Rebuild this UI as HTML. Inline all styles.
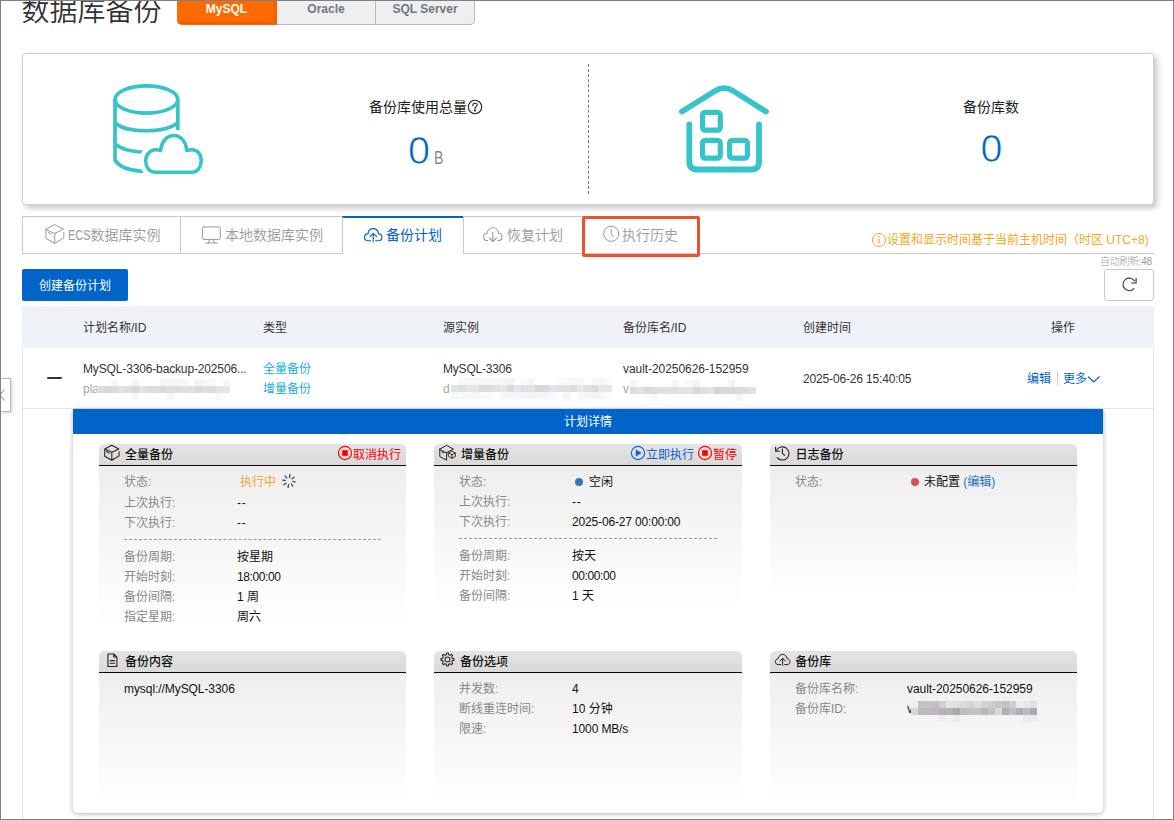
<!DOCTYPE html>
<html lang="zh-CN">
<head>
<meta charset="utf-8">
<title>数据库备份</title>
<style>
*{box-sizing:border-box;margin:0;padding:0}
html,body{width:1174px;height:820px;overflow:hidden;background:#fff}
body{position:relative;font-family:"Liberation Sans","Noto Sans CJK SC",sans-serif;font-size:12px;color:#333}
.abs{position:absolute}
.t{position:absolute;white-space:nowrap;line-height:1}
#frame{position:absolute;left:0;top:0;width:1174px;height:820px;border:1px solid #808080;z-index:50;pointer-events:none}
/* top */
#title{left:21.5px;top:-2.5px;font-size:28px;font-weight:350;color:#333;letter-spacing:0}
#dbtabs{left:177px;top:0;height:25px;display:flex}
#dbtabs div{height:25px;line-height:18px;font-size:12px;font-weight:bold;text-align:center;color:#6d7885;background:#efefef;border:1px solid #b9b9b9;border-top:none;border-left:none}
#dbtabs .on{background:#ff6a00;color:#fff;border-color:#ff6a00;border-radius:0 0 0 5px;box-shadow:inset -2px -2px 2px rgba(200,70,0,.35)}
#dbtabs .last{border-radius:0 0 5px 0}
/* stat card */
#stat{left:22px;top:53px;width:1132px;height:152px;border:1px solid #d0d0d0;border-radius:4px;background:#fff;box-shadow:3px 3px 6px rgba(0,0,0,.24)}
.lbl14{font-size:14px;color:#222}
.big{font-size:39.5px;color:#0064c8;-webkit-text-stroke:0.7px #fff}
/* tabs */
#tabline{left:22px;top:253px;width:1132px;height:1px;background:#c8c9cc}
.tab{position:absolute;top:216px;height:38px;border:1px solid #c8c9cc;border-right:none;background:#fff;color:#999;font-size:14px}
.tab .t{top:11px;font-weight:350}
/* table */
#thead{left:22px;top:306px;width:1132px;height:42px;background:#eff3f8}
.th{top:322px;color:#333}
.lnk{color:#0064c8}
.gray{color:#a6a6a6}
/* detail */
#detail{left:73px;top:409px;width:1030px;height:404px;background:#fff;border-radius:0 0 5px 5px;box-shadow:0 1px 5px rgba(0,0,0,.3)}
#dhead{left:73px;top:409px;width:1030px;height:25px;background:#0064c8;color:#fff;text-align:center;line-height:27px}
.ph{position:absolute;height:22px;background:linear-gradient(#e4e4e4,#d9d9d9);border-bottom:1px solid #0a0a0a;border-radius:5px 5px 0 0}
.pb{position:absolute;background:linear-gradient(#eeeeee,#ffffff)}
.pt{font-weight:500;color:#111}
.k{color:#888}
.v{color:#111}
.blur{background:linear-gradient(90deg,#e9e9e9,#d9d9d9 20%,#ececec 35%,#d4d4d4 55%,#e6e6e6 70%,#d6d6d6 85%,#ececec);filter:blur(1.5px);opacity:.9}
.blur2{background:linear-gradient(90deg,#dcdcdc,#c9c3c8 15%,#d8d8da 30%,#c4bcc0 45%,#d5d5d8 60%,#bdb6ba 75%,#cfcfd2 88%,#c2bcc0);filter:blur(1.2px)}
.dash{position:absolute;height:0;border-top:1px dashed #999}
</style>
</head>
<body>
<!-- TOP -->
<div class="t" id="title">数据库备份</div>
<div class="abs" id="dbtabs">
  <div class="on" style="width:100px">MySQL</div>
  <div style="width:99px">Oracle</div>
  <div class="last" style="width:99px">SQL Server</div>
</div>

<!-- STAT CARD -->
<div class="abs" id="stat"></div>
<div id="stat-content">
<svg class="abs" style="left:113px;top:84px" width="92" height="92" viewBox="0 0 92 92" fill="none" stroke="#35c4ca" stroke-width="3.7">
  <ellipse cx="33.4" cy="15.5" rx="31.4" ry="13.65"/>
  <path d="M2 15.5 L2 76 C6 83 18 87 33.4 87.5"/>
  <path d="M64.8 15.5 L64.8 47"/>
  <path d="M2 38.5 C12 49.5 54 49.5 64.8 38.5"/>
  <path d="M2 59.5 C8 65.5 20 68 33.4 68.3"/>
  <path d="M41.8 88.2 C36 88.2 32.7 83 32.7 76.75 C32.7 70 37.5 65.8 43 65.8 C44.5 65.8 46 66 47.6 66.4 C48.5 58 53.5 51.4 60.8 51.4 C68 51.4 73 58 73.9 66.4 C75.5 66 77.5 65.8 79.1 65.8 C84.5 65.8 88.2 70.5 88.2 76.75 C88.2 83 84.5 88.2 79.1 88.2 Z" stroke="#fff" stroke-width="12" fill="#fff"/>
  <path d="M41.8 88.2 C36 88.2 32.7 83 32.7 76.75 C32.7 70 37.5 65.8 43 65.8 C44.5 65.8 46 66 47.6 66.4 C48.5 58 53.5 51.4 60.8 51.4 C68 51.4 73 58 73.9 66.4 C75.5 66 77.5 65.8 79.1 65.8 C84.5 65.8 88.2 70.5 88.2 76.75 C88.2 83 84.5 88.2 79.1 88.2 Z" stroke-width="3.5"/>
</svg>
<div class="t lbl14" style="left:369px;top:100px">备份库使用总量</div>
<svg class="abs" style="left:467px;top:99px" width="16" height="16" viewBox="0 0 16 16" fill="none" stroke="#222" stroke-width="1.1"><circle cx="8" cy="8" r="6.7"/><path d="M5.8 6.4 C5.8 4.9 6.8 4.2 8 4.2 C9.3 4.2 10.2 5 10.2 6.1 C10.2 7.6 8 7.7 8 9.4" stroke-linecap="round"/><circle cx="8" cy="11.4" r="0.5" fill="#222"/></svg>
<div class="t big" style="left:408px;top:131px">0</div>
<div class="t" style="left:433.5px;top:149px;font-size:18px;color:#888;transform:scaleX(.78);transform-origin:left">B</div>
<div class="abs" style="left:588px;top:64px;width:0;height:130px;border-left:1px dashed #777"></div>
<svg class="abs" style="left:670px;top:78px" width="110" height="102" viewBox="0 0 110 102" fill="none" stroke="#35c4ca" stroke-linecap="round" stroke-linejoin="round">
  <path d="M11.8 33.6 L44.8 13.07 Q54.1 7.2 63.5 13.07 L96.1 33.6" stroke-width="5.7"/>
  <path d="M19.3 46.3 L19.3 83.5 Q19.3 91.5 27.3 91.5 L81 91.5 Q89 91.5 89 83.5 L89 46.3" stroke-width="5.8"/>
  <rect x="32.5" y="34.3" width="17.8" height="17.8" rx="2.6" stroke-width="5.2"/>
  <rect x="32.5" y="62.3" width="17.8" height="17.8" rx="2.6" stroke-width="5.2"/>
  <rect x="59.6" y="62.3" width="17.8" height="17.8" rx="2.6" stroke-width="5.2"/>
</svg>
<div class="t lbl14" style="left:963px;top:100px">备份库数</div>
<div class="t big" style="left:980.5px;top:129px">0</div>
</div>

<!-- TABS -->
<div id="tabs">
<div class="abs" id="tabline"></div>
<div class="tab" style="left:22px;width:159px">
  <svg class="abs" style="left:21.5px;top:6px" width="20" height="22" viewBox="0 0 20 22" fill="none" stroke="#999" stroke-width="1" stroke-linejoin="round" stroke-linecap="round"><path d="M0.9 6.2 L9.6 1.6 L18.5 6.2 L9.8 10.3 Z M0.9 6.2 V15.4 L9.8 20.3 L18.8 14.9 V9.3 M9.8 10.3 V20.3 M3.2 9.3 L6.5 11.4"/></svg>
  <div class="t" style="left:44.5px"><span style="display:inline-block;width:23px;transform:scaleX(.78);transform-origin:left center">ECS</span>数据库实例</div>
</div>
<div class="tab" style="left:180px;width:163px">
  <svg class="abs" style="left:20px;top:8px" width="21" height="20" viewBox="0 0 21 20" fill="none" stroke="#999" stroke-width="1" stroke-linecap="round"><rect x="1.4" y="1.9" width="17.9" height="12.5" rx="1.6"/><path d="M4.5 18 H16.5 M8.5 14.5 L7.3 17.8 M12.1 14.5 L13.4 17.8"/></svg>
  <div class="t" style="left:44px">本地数据库实例</div>
</div>
<div class="tab" style="left:342px;width:121px;border-top:2px solid #0064c8;border-bottom:none;color:#0064c8;height:38px">
  <svg class="abs" style="left:19.8px;top:8.7px" width="20.8" height="17" viewBox="0 0 22 18" fill="none" stroke="#0064c8" stroke-width="1.2" stroke-linecap="round" stroke-linejoin="round"><path d="M8.3 14.5 H5.2 C3.2 14.5 1.6 12.9 1.6 10.9 C1.6 9 3.1 7.4 5.2 7.3 C5.5 4.1 7.8 1.7 10.8 1.7 C13.8 1.7 16.1 4.1 16.4 7.3 C18.5 7.4 20 9 20 10.9 C20 12.9 18.4 14.5 16.4 14.5 H13.4"/><path d="M10.8 15.5 V6.8 M7.5 10.1 L10.8 6.8 L14.4 10.1"/></svg>
  <div class="t" style="left:43px;top:10px;font-weight:400">备份计划</div>
</div>
<div class="tab" style="left:463px;width:120px;border-right:none">
  <svg class="abs" style="left:18px;top:9px" width="22" height="18" viewBox="0 0 22 18" fill="none" stroke="#999" stroke-width="1.1" stroke-linecap="round" stroke-linejoin="round"><path d="M5.7 14.5 H5.2 C3.2 14.5 1.6 12.9 1.6 10.9 C1.6 9 3.1 7.4 5.2 7.3 C5.5 4.1 7.8 1.7 10.8 1.7 C13.8 1.7 16.1 4.1 16.4 7.3 C18.5 7.4 20 9 20 10.9 C20 12.9 18.4 14.5 16.4 14.5 H15.9"/><path d="M10.8 6.3 V15.5 M7.2 11.9 L10.8 15.5 L14.6 11.9"/></svg>
  <div class="t" style="left:43px">恢复计划</div>
</div>
<div class="tab" style="left:583px;width:116px;border-left:none">
  <svg class="abs" style="left:19px;top:8px" width="18" height="18" viewBox="0 0 18 18" fill="none" stroke="#999" stroke-width="1" stroke-linecap="round" stroke-linejoin="round"><circle cx="9.3" cy="8.8" r="7.6"/><path d="M9.3 4.5 V9.4 L11.6 11.7"/></svg>
  <div class="t" style="left:39px">执行历史</div>
</div>
<div class="abs" style="left:581.5px;top:216px;width:118px;height:40.5px;border:3px solid #ec512e;border-radius:2px"></div>
<svg class="abs" style="left:871px;top:232px" width="16" height="16" viewBox="0 0 16 16" fill="none" stroke="#f5a623" stroke-width="1"><circle cx="8" cy="8" r="6.6"/><path d="M8 7 V11.4" stroke-width="1.3"/><circle cx="8" cy="4.8" r="0.8" fill="#f5a623" stroke="none"/></svg>
<div class="t" style="left:887px;top:234px;color:#f5a623;font-size:12px">设置和显示时间基于当前主机时间（时区 UTC+8)</div>
</div>

<!-- TOOLBAR -->
<div id="toolbar">
<div class="abs" style="left:22px;top:269px;width:106px;height:32px;background:#0064c8;border-radius:2px;color:#fff;text-align:center;line-height:35px;font-size:12px">创建备份计划</div>
<div class="t" style="left:1100px;top:257px;font-size:10px;color:#999;letter-spacing:-0.3px;font-weight:300">自动刷新:48</div>
<div class="abs" style="left:1104px;top:269px;width:50px;height:32px;border:1px solid #c8c8c8;border-radius:3px;background:#fff"></div>
<svg class="abs" style="left:1120px;top:275px" width="20" height="20" viewBox="0 0 20 20" fill="none" stroke="#333" stroke-width="1.1"><path d="M14.76 6.25 A6.3 6.3 0 1 0 14.13 13.45"/><path d="M16.1 3 V8 H11.2"/></svg>
</div>

<!-- TABLE -->
<div id="table">
<div class="abs" style="left:22px;top:306px;width:1px;height:514px;background:#e3e6ea"></div>
<div class="abs" style="left:1153px;top:306px;width:1px;height:514px;background:#e3e6ea"></div>
<div class="abs" id="thead"></div>
<div class="t th" style="left:83px">计划名称/ID</div>
<div class="t th" style="left:263px">类型</div>
<div class="t th" style="left:443px">源实例</div>
<div class="t th" style="left:623px">备份库名/ID</div>
<div class="t th" style="left:803px">创建时间</div>
<div class="t th" style="left:1051px">操作</div>
<div class="abs" style="left:22px;top:408px;width:1132px;height:1px;background:#e3e6ea"></div>
<div class="abs" style="left:47px;top:377px;width:15px;height:2px;background:#333;border-radius:1px"></div>
<div class="t" style="left:83px;top:363px;letter-spacing:-0.145px">MySQL-3306-backup-202506...</div>
<div class="t gray" style="left:83px;top:383px">pla</div>
<svg class="abs" style="left:97px;top:379px" width="133" height="21" viewBox="0 0 133 21" shape-rendering="crispEdges"><rect x="14" y="0" width="7" height="7" fill="#f7f5f3"/><rect x="35" y="0" width="7" height="7" fill="#f1f4f8"/><rect x="63" y="0" width="7" height="7" fill="#f2f6f2"/><rect x="70" y="0" width="7" height="7" fill="#f4f5f5"/><rect x="77" y="0" width="7" height="7" fill="#f4f5f5"/><rect x="84" y="0" width="7" height="7" fill="#f7f9f8"/><rect x="98" y="0" width="7" height="7" fill="#f4f2f4"/><rect x="105" y="0" width="7" height="7" fill="#f6f8fc"/><rect x="112" y="0" width="7" height="7" fill="#f8f7fa"/><rect x="126" y="0" width="7" height="7" fill="#f2f6f7"/><rect x="0" y="7" width="7" height="7" fill="#dedcde"/><rect x="7" y="7" width="7" height="7" fill="#d5d9dc"/><rect x="14" y="7" width="7" height="7" fill="#dadce0"/><rect x="21" y="7" width="7" height="7" fill="#dee2e4"/><rect x="28" y="7" width="7" height="7" fill="#dddce1"/><rect x="35" y="7" width="7" height="7" fill="#d7d8d7"/><rect x="42" y="7" width="7" height="7" fill="#e1e4e7"/><rect x="49" y="7" width="7" height="7" fill="#dfdcdb"/><rect x="56" y="7" width="7" height="7" fill="#dadddb"/><rect x="63" y="7" width="7" height="7" fill="#ddd9da"/><rect x="70" y="7" width="7" height="7" fill="#dddddc"/><rect x="77" y="7" width="7" height="7" fill="#dedcdd"/><rect x="84" y="7" width="7" height="7" fill="#dee1e3"/><rect x="91" y="7" width="7" height="7" fill="#e1dfe1"/><rect x="98" y="7" width="7" height="7" fill="#d7dbda"/><rect x="105" y="7" width="7" height="7" fill="#dedfe2"/><rect x="112" y="7" width="7" height="7" fill="#dedce0"/><rect x="119" y="7" width="7" height="7" fill="#e5e3e0"/><rect x="126" y="7" width="7" height="7" fill="#e6e5e7"/><rect x="35" y="14" width="7" height="7" fill="#f6f5fb"/><rect x="70" y="14" width="7" height="7" fill="#f6f6fa"/><rect x="119" y="14" width="7" height="7" fill="#f8f8fa"/></svg>
<div class="t" style="left:263px;top:363px;color:#17afd3">全量备份</div>
<div class="t" style="left:263px;top:383px;color:#17afd3">增量备份</div>
<div class="t" style="left:443px;top:363px;letter-spacing:-0.19px">MySQL-3306</div>
<div class="t gray" style="left:443px;top:383px">d</div>
<svg class="abs" style="left:451px;top:378px" width="161" height="21" viewBox="0 0 161 21" shape-rendering="crispEdges"><rect x="7" y="0" width="7" height="7" fill="#f7f9f7"/><rect x="14" y="0" width="7" height="7" fill="#f7f5f6"/><rect x="21" y="0" width="7" height="7" fill="#f8f6f7"/><rect x="28" y="0" width="7" height="7" fill="#f7f4f8"/><rect x="35" y="0" width="7" height="7" fill="#faf5fa"/><rect x="42" y="0" width="7" height="7" fill="#fcf7fa"/><rect x="49" y="0" width="7" height="7" fill="#f4f7fb"/><rect x="56" y="0" width="7" height="7" fill="#f2f4fa"/><rect x="70" y="0" width="7" height="7" fill="#f7f9fa"/><rect x="77" y="0" width="7" height="7" fill="#f4f5f6"/><rect x="105" y="0" width="7" height="7" fill="#fcf6fe"/><rect x="112" y="0" width="7" height="7" fill="#faf9f6"/><rect x="119" y="0" width="7" height="7" fill="#f5f7f6"/><rect x="126" y="0" width="7" height="7" fill="#f6f8f9"/><rect x="140" y="0" width="7" height="7" fill="#f8f8f7"/><rect x="147" y="0" width="7" height="7" fill="#f4f3f6"/><rect x="154" y="0" width="7" height="7" fill="#fbfaf8"/><rect x="0" y="7" width="7" height="7" fill="#e2e4e5"/><rect x="7" y="7" width="7" height="7" fill="#dfdedf"/><rect x="14" y="7" width="7" height="7" fill="#e6e1e4"/><rect x="21" y="7" width="7" height="7" fill="#e4e4e4"/><rect x="28" y="7" width="7" height="7" fill="#dedbe0"/><rect x="35" y="7" width="7" height="7" fill="#e2dddd"/><rect x="42" y="7" width="7" height="7" fill="#dee0e2"/><rect x="49" y="7" width="7" height="7" fill="#e8e5e7"/><rect x="56" y="7" width="7" height="7" fill="#dcd9d9"/><rect x="63" y="7" width="7" height="7" fill="#e8e3e5"/><rect x="70" y="7" width="7" height="7" fill="#e4dfe0"/><rect x="77" y="7" width="7" height="7" fill="#e2e2e6"/><rect x="84" y="7" width="7" height="7" fill="#dbd7db"/><rect x="91" y="7" width="7" height="7" fill="#dcd6de"/><rect x="98" y="7" width="7" height="7" fill="#e2e5e8"/><rect x="105" y="7" width="7" height="7" fill="#e2e2e2"/><rect x="112" y="7" width="7" height="7" fill="#e1e1e5"/><rect x="119" y="7" width="7" height="7" fill="#deddde"/><rect x="126" y="7" width="7" height="7" fill="#e5e7e7"/><rect x="133" y="7" width="7" height="7" fill="#dfdede"/><rect x="140" y="7" width="7" height="7" fill="#dcdde1"/><rect x="147" y="7" width="7" height="7" fill="#eae5ea"/><rect x="154" y="7" width="7" height="7" fill="#e5e7e8"/><rect x="0" y="14" width="7" height="7" fill="#f6f6f6"/><rect x="7" y="14" width="7" height="7" fill="#f5f9fb"/><rect x="14" y="14" width="7" height="7" fill="#f8f9fa"/><rect x="21" y="14" width="7" height="7" fill="#f8f5f4"/><rect x="28" y="14" width="7" height="7" fill="#f9fbf7"/><rect x="35" y="14" width="7" height="7" fill="#fbf9f9"/><rect x="49" y="14" width="7" height="7" fill="#f4f4f9"/><rect x="56" y="14" width="7" height="7" fill="#f6f5fb"/><rect x="63" y="14" width="7" height="7" fill="#f8f6fd"/><rect x="70" y="14" width="7" height="7" fill="#f5f3f6"/><rect x="77" y="14" width="7" height="7" fill="#f5f3f5"/><rect x="84" y="14" width="7" height="7" fill="#f7f4f5"/><rect x="91" y="14" width="7" height="7" fill="#f6f3f9"/><rect x="98" y="14" width="7" height="7" fill="#f8faf9"/><rect x="112" y="14" width="7" height="7" fill="#f4f5f4"/><rect x="126" y="14" width="7" height="7" fill="#f9f6fa"/><rect x="133" y="14" width="7" height="7" fill="#f6f6f5"/><rect x="140" y="14" width="7" height="7" fill="#f3f3f7"/><rect x="147" y="14" width="7" height="7" fill="#f7f4fb"/><rect x="154" y="14" width="7" height="7" fill="#fdfafc"/></svg>
<div class="t" style="left:623px;top:363px;letter-spacing:-0.06px">vault-20250626-152959</div>
<div class="t gray" style="left:623px;top:383px">v</div>
<svg class="abs" style="left:630px;top:380px" width="126" height="21" viewBox="0 0 126 21" shape-rendering="crispEdges"><rect x="0" y="0" width="7" height="7" fill="#f4f3f5"/><rect x="42" y="0" width="7" height="7" fill="#f6f4f4"/><rect x="56" y="0" width="7" height="7" fill="#faf7f9"/><rect x="63" y="0" width="7" height="7" fill="#f4f2f4"/><rect x="98" y="0" width="7" height="7" fill="#f4f3f8"/><rect x="0" y="7" width="7" height="7" fill="#dcdddc"/><rect x="7" y="7" width="7" height="7" fill="#e0e0e5"/><rect x="14" y="7" width="7" height="7" fill="#d9dad7"/><rect x="21" y="7" width="7" height="7" fill="#dadddc"/><rect x="28" y="7" width="7" height="7" fill="#e2dde3"/><rect x="35" y="7" width="7" height="7" fill="#e2e0e4"/><rect x="42" y="7" width="7" height="7" fill="#dfdee5"/><rect x="49" y="7" width="7" height="7" fill="#e4e1e1"/><rect x="56" y="7" width="7" height="7" fill="#e3e2e1"/><rect x="63" y="7" width="7" height="7" fill="#d5d9da"/><rect x="70" y="7" width="7" height="7" fill="#e0dddb"/><rect x="77" y="7" width="7" height="7" fill="#e2e3e2"/><rect x="84" y="7" width="7" height="7" fill="#d7d4d6"/><rect x="91" y="7" width="7" height="7" fill="#dadadd"/><rect x="98" y="7" width="7" height="7" fill="#dbd7d9"/><rect x="105" y="7" width="7" height="7" fill="#d8dcdf"/><rect x="112" y="7" width="7" height="7" fill="#dadddf"/><rect x="119" y="7" width="7" height="7" fill="#e2e2e1"/><rect x="21" y="14" width="7" height="7" fill="#f9f9f8"/><rect x="105" y="14" width="7" height="7" fill="#f6f4fc"/></svg>
<div class="t" style="left:803px;top:373px;letter-spacing:-0.16px">2025-06-26 15:40:05</div>
<div class="t lnk" style="left:1027px;top:373px">编辑</div>
<div class="abs" style="left:1057px;top:371px;width:1px;height:15px;background:#ccc"></div>
<div class="t lnk" style="left:1063px;top:373px">更多</div>
<svg class="abs" style="left:1087px;top:374px" width="14" height="10" viewBox="0 0 14 10" fill="none" stroke="#0064c8" stroke-width="1.1"><path d="M1 2.5 L6.8 8 L12.6 2.5"/></svg>
<div class="abs" style="left:0;top:378px;width:11px;height:34px;border:1px solid #b4bcc8;border-left:none;background:#fff;box-shadow:1px 1px 4px rgba(0,0,0,.2)"></div>
<svg class="abs" style="left:-1px;top:388px" width="8" height="14" viewBox="0 0 8 14" fill="none" stroke="#999" stroke-width="1.1"><path d="M5.5 1.5 L0.8 7 L5.5 12.5"/></svg>
</div>

<!-- DETAIL -->
<div id="detailwrap">
<div class="abs" id="detail"></div>
<div class="abs" id="dhead">计划详情</div>
<div class="ph" style="left:99px;top:444px;width:307px"></div><div class="pb" style="left:99px;top:466px;width:307px;height:162px"></div><svg class="abs" style="left:104px;top:444px" width="16" height="17.6" viewBox="0 0 20 22" fill="none" stroke="#222" stroke-width="1.3" stroke-linejoin="round" stroke-linecap="round"><path d="M0.9 6.2 L9.6 1.6 L18.5 6.2 L9.8 10.3 Z M0.9 6.2 V15.4 L9.8 20.3 L18.8 14.9 V9.3 M9.8 10.3 V20.3 M3.2 9.3 L6.5 11.4"/></svg><div class="t pt" style="left:125px;top:449px">全量备份</div>
<svg class="abs" style="left:337px;top:445px" width="16" height="16" viewBox="0 0 16 16" fill="none" stroke="#ff0000" stroke-width="1.1"><circle cx="8" cy="8" r="6.6"/><rect x="5.2" y="5.2" width="5.6" height="5.6" fill="#ff0000" stroke="none"/></svg><div class="t" style="left:353px;top:449px;color:#ff0000">取消执行</div>
<div class="ph" style="left:434px;top:444px;width:308px"></div><div class="pb" style="left:434px;top:466px;width:308px;height:142px"></div><svg class="abs" style="left:439px;top:444px" width="18" height="17" viewBox="0 0 18 17" fill="none" stroke="#222" stroke-width="1" stroke-linejoin="round" stroke-linecap="round"><path d="M0.8 5.1 L7.6 1.4 L14.4 5.1 L7.6 8.6 Z M0.8 5.1 V12.6 L7.6 16.2 V8.6 M2.8 7.8 L5 9"/><path d="M9.6 9 L12.9 7.2 L16.3 9 V12.4 L12.9 14.3 L9.6 12.4 Z M9.6 9 L12.9 10.8 L16.3 9 M12.9 10.8 V14.3" stroke-width="0.9"/></svg><div class="t pt" style="left:461px;top:449px">增量备份</div>
<svg class="abs" style="left:630px;top:445px" width="16" height="16" viewBox="0 0 16 16" fill="none" stroke="#0e63c7" stroke-width="1.1"><circle cx="8" cy="8" r="6.6"/><path d="M5.8 4.6 L11.6 8 L5.8 11.4 Z" fill="#0e63c7" stroke="none"/></svg><div class="t" style="left:646px;top:449px;color:#0e63c7">立即执行</div><svg class="abs" style="left:697px;top:445px" width="16" height="16" viewBox="0 0 16 16" fill="none" stroke="#ff0000" stroke-width="1.1"><circle cx="8" cy="8" r="6.6"/><rect x="5.2" y="5.2" width="5.6" height="5.6" fill="#ff0000" stroke="none"/></svg><div class="t" style="left:713px;top:449px;color:#ff0000">暂停</div>
<div class="ph" style="left:770px;top:444px;width:307px"></div><div class="pb" style="left:770px;top:466px;width:307px;height:131px"></div><svg class="abs" style="left:774.3px;top:444.7px" width="16" height="16" viewBox="0 0 16 16" fill="none" stroke="#222" stroke-width="1.1" stroke-linecap="round" stroke-linejoin="round"><path d="M2.6 5.2 A6.6 6.6 0 1 1 3.2 12.6"/><path d="M1.6 2.2 V6.2 H5.6"/><path d="M8.4 4 V8.6 L10.6 10.2"/></svg><div class="t pt" style="left:795.5px;top:449px">日志备份</div>
<div class="t k" style="left:124px;top:476px">状态:</div><div class="t v" style="left:240px;top:476px;color:#f2a33c">执行中</div><svg class="abs" style="left:281.5px;top:473.5px" width="14" height="14" viewBox="0 0 14 14" stroke="#222" stroke-width="1.3" stroke-linecap="round"><line x1="7.51" y1="3.34" x2="7.89" y2="0.66" stroke-opacity="0.85"/><line x1="9.95" y1="4.77" x2="12.11" y2="3.15" stroke-opacity="0.80"/><line x1="10.66" y1="7.51" x2="13.34" y2="7.89" stroke-opacity="0.70"/><line x1="9.23" y1="9.95" x2="10.85" y2="12.11" stroke-opacity="0.80"/><line x1="6.49" y1="10.66" x2="6.11" y2="13.34" stroke-opacity="0.85"/><line x1="4.05" y1="9.23" x2="1.89" y2="10.85" stroke-opacity="0.80"/><line x1="3.34" y1="6.49" x2="0.66" y2="6.11" stroke-opacity="0.75"/><line x1="4.77" y1="4.05" x2="3.15" y2="1.89" stroke-opacity="0.80"/></svg>
<div class="t k" style="left:124px;top:496.5px">上次执行:</div><div class="t v" style="left:237px;top:496.5px;;letter-spacing:0.7px">--</div><div class="t k" style="left:124px;top:517px">下次执行:</div><div class="t v" style="left:237px;top:517px;;letter-spacing:0.7px">--</div><div class="dash" style="left:124px;top:539px;width:257px"></div>
<div class="t k" style="left:124px;top:550.5px">备份周期:</div><div class="t v" style="left:237px;top:550.5px;">按星期</div><div class="t k" style="left:124px;top:570.5px">开始时刻:</div><div class="t v" style="left:237px;top:570.5px;;letter-spacing:-0.39px">18:00:00</div><div class="t k" style="left:124px;top:591px">备份间隔:</div><div class="t v" style="left:237px;top:591px;">1 周</div><div class="t k" style="left:124px;top:611px">指定星期:</div><div class="t v" style="left:237px;top:611px;">周六</div>
<div class="t k" style="left:459px;top:476px">状态:</div><div class="t v" style="left:589px;top:476px;">空闲</div><div class="abs" style="left:575px;top:478px;width:8px;height:8px;border-radius:50%;background:#337ab7"></div>
<div class="t k" style="left:459px;top:495.5px">上次执行:</div><div class="t v" style="left:572px;top:495.5px;;letter-spacing:0.7px">--</div><div class="t k" style="left:459px;top:516px">下次执行:</div><div class="t v" style="left:572px;top:516px;;letter-spacing:-0.16px">2025-06-27 00:00:00</div><div class="dash" style="left:459px;top:538px;width:258px"></div>
<div class="t k" style="left:459px;top:549.5px">备份周期:</div><div class="t v" style="left:572px;top:549.5px;">按天</div><div class="t k" style="left:459px;top:569.5px">开始时刻:</div><div class="t v" style="left:572px;top:569.5px;;letter-spacing:-0.39px">00:00:00</div><div class="t k" style="left:459px;top:590px">备份间隔:</div><div class="t v" style="left:572px;top:590px;">1 天</div>
<div class="t k" style="left:795px;top:476px">状态:</div><div class="t v" style="left:924px;top:476px;">未配置 <span style="color:#1f6fc6">(编辑)</span></div><div class="abs" style="left:911px;top:478px;width:8px;height:8px;border-radius:50%;background:#d9534f"></div>
<div class="ph" style="left:99px;top:651px;width:307px"></div><div class="pb" style="left:99px;top:673px;width:307px;height:130px"></div><svg class="abs" style="left:106.5px;top:652.5px" width="11" height="14.7" viewBox="0 0 12 16" fill="none" stroke="#222" stroke-width="1.2" stroke-linejoin="round"><path d="M1 1 H7.4 L10.8 4.4 V14.8 H1 Z M7.4 1 V4.4 H10.8"/><path d="M3 8.4 H8.8 M3 11.2 H8.8" stroke-width="1.3"/></svg><div class="t pt" style="left:125px;top:656px">备份内容</div>
<div class="ph" style="left:434px;top:651px;width:308px"></div><div class="pb" style="left:434px;top:673px;width:308px;height:130px"></div><svg class="abs" style="left:439.8px;top:652.2px" width="15" height="15" viewBox="0 0 16 16" fill="none" stroke="#222" stroke-width="1.1" stroke-linejoin="round"><path d="M6.79 2.94 L7.07 1.06 L8.93 1.06 L9.21 2.94 L10.72 3.57 L12.25 2.44 L13.56 3.75 L12.43 5.28 L13.06 6.79 L14.94 7.07 L14.94 8.93 L13.06 9.21 L12.43 10.72 L13.56 12.25 L12.25 13.56 L10.72 12.43 L9.21 13.06 L8.93 14.94 L7.07 14.94 L6.79 13.06 L5.28 12.43 L3.75 13.56 L2.44 12.25 L3.57 10.72 L2.94 9.21 L1.06 8.93 L1.06 7.07 L2.94 6.79 L3.57 5.28 L2.44 3.75 L3.75 2.44 L5.28 3.57 Z"/><circle cx="8" cy="8" r="2.6"/></svg><div class="t pt" style="left:460px;top:656px">备份选项</div>
<div class="ph" style="left:770px;top:651px;width:307px"></div><div class="pb" style="left:770px;top:673px;width:307px;height:130px"></div><svg class="abs" style="left:774px;top:653px" width="17.6" height="14.4" viewBox="0 0 22 18" fill="none" stroke="#222" stroke-width="1.25" stroke-linecap="round" stroke-linejoin="round"><path d="M8.3 14.5 H5.2 C3.2 14.5 1.6 12.9 1.6 10.9 C1.6 9 3.1 7.4 5.2 7.3 C5.5 4.1 7.8 1.7 10.8 1.7 C13.8 1.7 16.1 4.1 16.4 7.3 C18.5 7.4 20 9 20 10.9 C20 12.9 18.4 14.5 16.4 14.5 H13.4"/><path d="M10.8 15.5 V6.8 M7.5 10.1 L10.8 6.8 L14.4 10.1"/></svg><div class="t pt" style="left:795.3px;top:656px">备份库</div>
<div class="t v" style="left:124px;top:683px;letter-spacing:-0.07px">mysql://MySQL-3306</div>
<div class="t k" style="left:459px;top:683px">并发数:</div><div class="t v" style="left:572px;top:683px;">4</div><div class="t k" style="left:459px;top:703px">断线重连时间:</div><div class="t v" style="left:572px;top:703px;">10 分钟</div><div class="t k" style="left:459px;top:723px">限速:</div><div class="t v" style="left:572px;top:723px;;letter-spacing:-0.13px">1000 MB/s</div>
<div class="t k" style="left:795px;top:683px">备份库名称:</div><div class="t v" style="left:907px;top:683px;;letter-spacing:-0.06px">vault-20250626-152959</div><div class="t k" style="left:795px;top:703px">备份库ID:</div><div class="t v" style="left:907px;top:703px;">v</div><svg class="abs" style="left:911px;top:701px" width="126" height="21" viewBox="0 0 126 21" shape-rendering="crispEdges"><rect x="0" y="0" width="7" height="7" fill="#ededed"/><rect x="7" y="0" width="7" height="7" fill="#c4c2c0"/><rect x="14" y="0" width="7" height="7" fill="#c6c2c0"/><rect x="21" y="0" width="7" height="7" fill="#c2bfc4"/><rect x="28" y="0" width="7" height="7" fill="#ced0d4"/><rect x="35" y="0" width="7" height="7" fill="#e4e4e2"/><rect x="42" y="0" width="7" height="7" fill="#dfe1e1"/><rect x="49" y="0" width="7" height="7" fill="#e0d9d2"/><rect x="56" y="0" width="7" height="7" fill="#cfd6da"/><rect x="63" y="0" width="7" height="7" fill="#e0dedc"/><rect x="70" y="0" width="7" height="7" fill="#d2d4d4"/><rect x="77" y="0" width="7" height="7" fill="#cfcdcb"/><rect x="84" y="0" width="7" height="7" fill="#c8c5cc"/><rect x="91" y="0" width="7" height="7" fill="#c4c2c0"/><rect x="98" y="0" width="7" height="7" fill="#cad0d6"/><rect x="105" y="0" width="7" height="7" fill="#ebebeb"/><rect x="112" y="0" width="7" height="7" fill="#e8e6e8"/><rect x="119" y="0" width="7" height="7" fill="#dfe0e2"/><rect x="0" y="7" width="7" height="7" fill="#d2d6da"/><rect x="7" y="7" width="7" height="7" fill="#bdbbb8"/><rect x="14" y="7" width="7" height="7" fill="#c0b8b8"/><rect x="21" y="7" width="7" height="7" fill="#bcb8c0"/><rect x="28" y="7" width="7" height="7" fill="#b9b0b8"/><rect x="35" y="7" width="7" height="7" fill="#b0b4b8"/><rect x="42" y="7" width="7" height="7" fill="#aaaaaa"/><rect x="49" y="7" width="7" height="7" fill="#c2bcb6"/><rect x="56" y="7" width="7" height="7" fill="#c0c2c2"/><rect x="63" y="7" width="7" height="7" fill="#bfc3ca"/><rect x="70" y="7" width="7" height="7" fill="#beb8b4"/><rect x="77" y="7" width="7" height="7" fill="#c2c2c8"/><rect x="84" y="7" width="7" height="7" fill="#dadad4"/><rect x="91" y="7" width="7" height="7" fill="#b4aeb4"/><rect x="98" y="7" width="7" height="7" fill="#bcc2c6"/><rect x="105" y="7" width="7" height="7" fill="#b4aeac"/><rect x="112" y="7" width="7" height="7" fill="#b8bcc4"/><rect x="119" y="7" width="7" height="7" fill="#b0a8b0"/><rect x="28" y="14" width="7" height="7" fill="#efeaec"/><rect x="35" y="14" width="7" height="7" fill="#f0f0f0"/><rect x="42" y="14" width="7" height="7" fill="#eeeeee"/><rect x="112" y="14" width="7" height="7" fill="#ebebeb"/><rect x="119" y="14" width="7" height="7" fill="#ececec"/></svg>
</div>

<div id="frame"></div>
</body>
</html>
